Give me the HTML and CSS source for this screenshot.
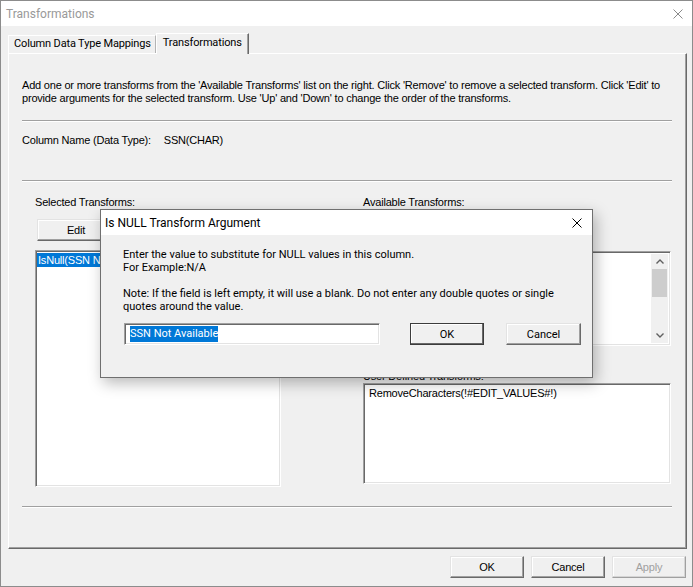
FILE: index.html
```html
<!DOCTYPE html>
<html lang="en">

<head>
  <meta charset="UTF-8">
  <title>Transformations</title>
  <link rel="stylesheet" href="styles.css">
</head>

<body>
  <div class="window">
    <div class="titlebar">
      <span class="title">Transformations</span>
      <svg class="close" width="10" height="10" viewBox="0 0 10 10">
        <path d="M0.5 0.5 L9.5 9.5 M9.5 0.5 L0.5 9.5" stroke="#8a8a8a" stroke-width="1" fill="none" />
      </svg>
    </div>

    <div class="tabs">
      <div class="tab">Column Data Type Mappings</div>
      <div class="tab active">Transformations</div>
    </div>

    <div class="panel">
      <p class="intro">Add one or more transforms from the 'Available Transforms' list on the right. Click 'Remove' to remove a selected transform. Click 'Edit' to<br>provide arguments for the selected transform. Use 'Up' and 'Down' to change the order of the transforms.</p>
      <div class="sep"></div>
      <div class="colname">
        <span>Column Name (Data Type):</span>
        <span class="colval">SSN(CHAR)</span>
      </div>
      <div class="sep sep-2"></div>

      <div class="cols">
        <div class="col-left">
          <div class="label">Selected Transforms:</div>
          <div class="btn btn-edit">Edit</div>
          <div class="list list-selected">
            <div class="item item-on">IsNull(SSN N</div>
          </div>
        </div>

        <!-- move buttons, hidden under the dialog -->
        <div class="col-mid">
          <div class="btn btn-small"></div>
          <div class="btn btn-small"></div>
          <div class="btn btn-small"></div>
          <div class="btn btn-small"></div>
        </div>

        <div class="col-right">
          <div class="label">Available Transforms:</div>
          <div class="list list-avail">
            <div class="vscroll">
              <div class="arrow">
                <svg width="8" height="5" viewBox="0 0 8 5"><path d="M0.5 4.5 L4 1 L7.5 4.5" stroke="#606060" stroke-width="1.4" fill="none" /></svg>
              </div>
              <div class="thumb"></div>
              <div class="track"></div>
              <div class="arrow">
                <svg width="8" height="5" viewBox="0 0 8 5"><path d="M0.5 0.5 L4 4 L7.5 0.5" stroke="#606060" stroke-width="1.4" fill="none" /></svg>
              </div>
            </div>
          </div>
          <div class="label label-user">User Defined Transforms:</div>
          <div class="list list-user">
            <div class="item">RemoveCharacters(!#EDIT_VALUES#!)</div>
          </div>
        </div>
      </div>

      <div class="sep sep-3"></div>
    </div>

    <div class="actions">
      <div class="btn btn-act">OK</div>
      <div class="btn btn-act">Cancel</div>
      <div class="btn btn-act disabled">Apply</div>
    </div>

    <!-- modal on top of the property sheet -->
    <div class="dialog">
      <div class="dlg-title">
        <span>Is NULL Transform Argument</span>
        <svg class="close" width="10" height="10" viewBox="0 0 10 10">
          <path d="M0.5 0.5 L9.5 9.5 M9.5 0.5 L0.5 9.5" stroke="#000" stroke-width="1" fill="none" />
        </svg>
      </div>
      <div class="dlg-body">
        <div class="dlg-text">
          Enter the value to substitute for NULL values in this column.<br>
          For Example:N/A<br>
          <br>
          Note: If the field is left empty, it will use a blank. Do not enter any double quotes or single<br>
          quotes around the value.
        </div>
        <div class="dlg-row">
          <div class="inp"><span class="sel-text">SSN Not Available</span></div>
          <div class="btn btn-dlg default">OK</div>
          <div class="btn btn-dlg">Cancel</div>
        </div>
      </div>
    </div>
  </div>
</body>

</html>
```

FILE: styles.css
```css
* {
  box-sizing: border-box;
}

html,
body {
  margin: 0;
  padding: 0;
}

body {
  width: 693px;
  height: 587px;
  background-color: #f0f0f0;
  color: #000;
  font-family: "Liberation Sans", Arial, sans-serif;
  font-size: 11px;
  letter-spacing: -0.2px;
}

.window {
  position: relative;
  width: 693px;
  height: 587px;
  border: 1px solid #8c8c8c;
  background-color: #f0f0f0;
}

.titlebar {
  height: 25px;
  background-color: #fff;
  display: flex;
  align-items: center;
  justify-content: space-between;
  padding: 0 9px 0 5px;
  font-family: Roboto, sans-serif;
  font-size: 12px;
  letter-spacing: 0;
  color: #999;
}

.tabs {
  display: flex;
  align-items: flex-end;
  height: 20px;
  margin: 7px 0 0 7px;
  position: relative;
  z-index: 1;
  font-family: Roboto, sans-serif;
  font-size: 11px;
  letter-spacing: -0.15px;
}

.tab {
  height: 18px;
  line-height: 16px;
  padding: 0 4px 0 5px;
  border: 1px solid #fff;
  border-right-color: #b4b4b4;
  border-bottom: none;
  background-color: #f0f0f0;
}

.tab.active {
  height: 21px;
  margin-bottom: -1px;
  padding: 0 6px;
  line-height: 17px;
  border-right: 1px solid #696969;
  box-shadow: inset -1px 0 #a0a0a0;
}

.panel {
  height: 496px;
  margin: 0 5px 0 7px;
  padding: 0 14px 0 13px;
  border: 1px solid;
  border-color: #fff #696969 #696969 #fff;
  box-shadow: inset -1px -1px #a0a0a0;
}

.intro {
  margin: 25px 0 0 0;
  line-height: 13px;
}

.sep {
  height: 2px;
  margin-top: 15px;
  border-top: 1px solid #a0a0a0;
  border-bottom: 1px solid #fff;
}

.colname {
  margin-top: 12px;
  line-height: 13px;
}

.colval {
  margin-left: 10px;
}

.sep-2 {
  margin-top: 33px;
}

.sep-3 {
  margin-top: 19px;
}

.cols {
  display: flex;
  padding-left: 13px;
}

.col-left {
  width: 246px;
  padding-top: 14px;
}

.col-mid {
  width: 43px;
  margin-left: 21px;
  padding-top: 83px;
}

.col-right {
  width: 308px;
  margin-left: 18px;
  padding-top: 14px;
}

.label {
  line-height: 13px;
}

.label-user {
  margin-top: 24px;
}

.btn {
  display: flex;
  align-items: center;
  justify-content: center;
  height: 22px;
  background-color: #f0f0f0;
  border: 1px solid;
  border-color: #e3e3e3 #696969 #696969 #e3e3e3;
  box-shadow: inset -1px -1px #a0a0a0, inset 1px 1px #fff;
}

.btn-edit {
  width: 78px;
  margin: 10px 0 0 2px;
}

.btn-small {
  margin-bottom: 8px;
}

.list {
  background-color: #fff;
  border: 1px solid;
  border-color: #a0a0a0 #fff #fff #a0a0a0;
  box-shadow: inset 1px 1px #696969, inset -1px -1px #e3e3e3;
  padding: 2px 2px 2px 1px;
}

.list-selected {
  height: 237px;
  margin-top: 9px;
}

.list-avail {
  height: 95px;
  margin-top: 42px;
  display: flex;
  justify-content: flex-end;
}

.list-user {
  height: 101px;
  padding-left: 4px;
}

.item {
  height: 14px;
  line-height: 14px;
  padding-left: 1px;
  white-space: nowrap;
}

.item-on {
  background-color: #0078d7;
  color: #fff;
}

.vscroll {
  width: 17px;
  display: flex;
  flex-direction: column;
  background-color: #f0f0f0;
}

.arrow {
  height: 15px;
  display: flex;
  align-items: center;
  justify-content: center;
}

.thumb {
  height: 28px;
  margin: 0 1px;
  background-color: #cdcdcd;
}

.track {
  flex: 1;
}

.actions {
  display: flex;
  justify-content: flex-end;
  margin: 7px 6px 0 0;
}

.btn-act {
  width: 74px;
  margin-left: 7px;
}

.btn-act.disabled {
  color: #a0a0a0;
  border-color: #e3e3e3 #a0a0a0 #a0a0a0 #e3e3e3;
  box-shadow: inset -1px -1px #d5d5d5, inset 1px 1px #fff;
}

/* dialog */
.dialog {
  position: absolute;
  left: 99px;
  top: 208px;
  width: 493px;
  height: 169px;
  background-color: #f0f0f0;
  border: 1px solid #6f6f6f;
  box-shadow: 3px 5px 14px rgba(0, 0, 0, 0.28);
  font-family: Roboto, sans-serif;
  font-size: 11px;
  letter-spacing: 0;
  z-index: 5;
}

.dlg-title {
  height: 25px;
  background-color: #fff;
  display: flex;
  align-items: center;
  justify-content: space-between;
  padding: 0 10px 0 4px;
  font-size: 12px;
}

.dlg-body {
  padding: 13px 0 0 22px;
}

.dlg-text {
  line-height: 13px;
}

.dlg-row {
  display: flex;
  margin-top: 10px;
}

.inp {
  width: 256px;
  height: 22px;
  margin-left: 1px;
  padding: 2px 0 0 5px;
  background-color: #fff;
  border: 1px solid;
  border-color: #a0a0a0 #fff #fff #a0a0a0;
  box-shadow: inset 1px 1px #696969, inset -1px -1px #e3e3e3;
}

.sel-text {
  display: inline-block;
  height: 16px;
  line-height: 16px;
  background-color: #0078d7;
  color: #fff;
}

.btn-dlg {
  width: 75px;
  margin-left: 22px;
}

.btn-dlg.default {
  width: 74px;
  margin-left: 30px;
  border-color: #3c3c3c;
  box-shadow: inset -1px -1px #696969, inset 1px 1px #fff;
}
```
